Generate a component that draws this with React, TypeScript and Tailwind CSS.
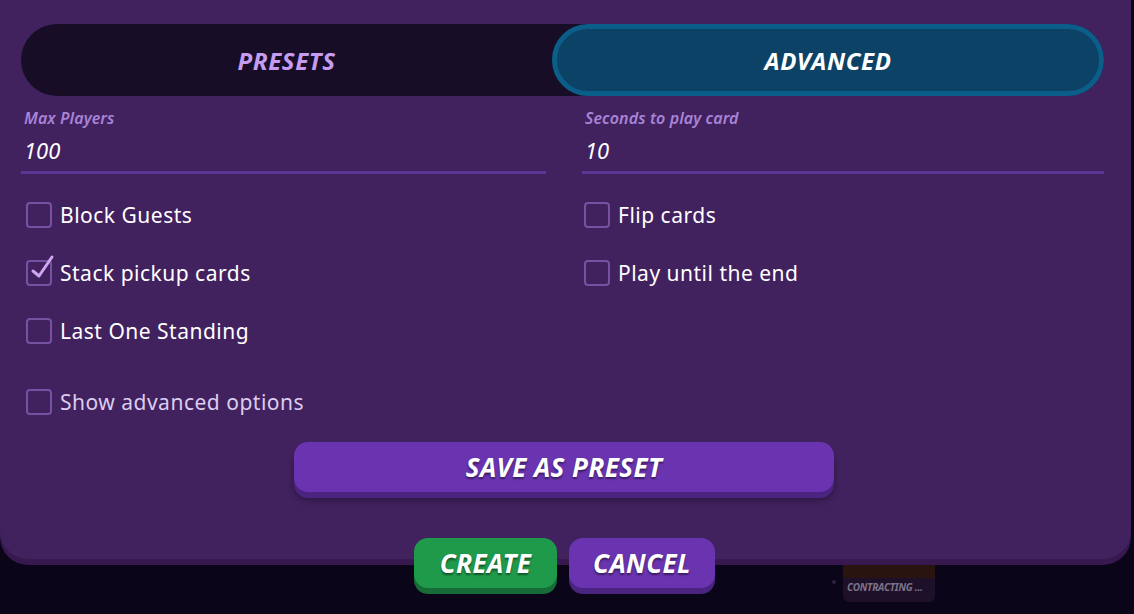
import { useState } from "react";

const font = { fontFamily: '"Noto Sans", "Open Sans", sans-serif' };

function Field({ label, value }: { label: string; value: string }) {
	return (
		<div className="flex flex-col">
			<span className="pl-[3px] text-[16px] font-semibold italic leading-[20px] tracking-[0.1px] text-[#a784d6]">
				{label}
			</span>
			<span className="mt-[9px] pl-[3px] text-[22px] italic leading-[26px] text-white">
				{value}
			</span>
			<div className="mt-[8px] h-[3px] bg-[#5f3594]" />
		</div>
	);
}

function Check({
	label,
	checked,
	muted,
	right,
}: {
	label: string;
	checked?: boolean;
	muted?: boolean;
	right?: boolean;
}) {
	return (
		<div
			className={`flex h-[30px] items-center gap-[8px] ${right ? "pl-[2px]" : "pl-[5px]"}`}
		>
			<div className="relative h-[26px] w-[26px] shrink-0 rounded-[4px] border-2 border-[#7652a3]">
				{checked && (
					<svg
						className="absolute left-[2px] top-[-8px]"
						width="26"
						height="28"
						viewBox="0 0 26 28"
						fill="none"
					>
						<path
							d="M3 17 L9 22 L22 3"
							stroke="#cfa6f2"
							strokeWidth="3"
							strokeLinecap="round"
							strokeLinejoin="round"
						/>
					</svg>
				)}
			</div>
			<span
				className={`text-[21px] leading-[26px] tracking-[0.5px] ${muted ? "text-[#dccdf0]" : "text-white"}`}
			>
				{label}
			</span>
		</div>
	);
}

export default function App() {
	const [tab, setTab] = useState<"presets" | "advanced">("advanced");

	const tabClass = (active: boolean) =>
		`flex items-center justify-center rounded-full pt-[2px] text-[24px] font-bold italic tracking-[0.6px] ${
			active
				? "border-[5px] border-[#0b5e88] bg-[#0d4267] text-white"
				: "text-[#c69cf0]"
		}`;

	return (
		<div
			className="relative h-[614px] w-[1134px] overflow-hidden bg-[#0a0519]"
			style={font}
		>
			{/* background card peeking below the modal */}
			<div className="absolute left-[843px] top-[540px] h-[62px] w-[92px] overflow-hidden rounded-[6px] bg-[#1d1028]">
				<div className="h-[38px] bg-[#2a1410]" />
				<div className="pl-[4px] pt-[2px] text-[10px] font-bold italic tracking-tight text-[#7d7387]">
					CONTRACTING ...
				</div>
			</div>
			<div className="absolute left-[832px] top-[580px] h-[4px] w-[4px] rounded-full bg-[#2a2340]" />

			<div className="relative w-[1131px] rounded-b-[28px] bg-[#42215f] pb-[6px] shadow-[0_6px_0_#37194f]">
				<div className="pl-[21px] pr-[27px] pt-[24px]">
					<div className="grid h-[72px] grid-cols-[531px_1fr] rounded-full bg-[#170d26]">
						<button
							onClick={() => setTab("presets")}
							className={tabClass(tab === "presets")}
						>
							PRESETS
						</button>
						<button
							onClick={() => setTab("advanced")}
							className={tabClass(tab === "advanced")}
						>
							ADVANCED
						</button>
					</div>

					<div className="mt-[12px] grid grid-cols-[525px_1fr] gap-x-[36px]">
						<Field label="Max Players" value="100" />
						<Field label="Seconds to play card" value="10" />
					</div>

					<div className="mt-[26px] grid grid-cols-[525px_1fr] gap-x-[36px] gap-y-[28px]">
						<Check label="Block Guests" />
						<Check label="Flip cards" right />
						<Check label="Stack pickup cards" checked />
						<Check label="Play until the end" right />
						<Check label="Last One Standing" />
					</div>

					<div className="mt-[41px]">
						<Check label="Show advanced options" muted />
					</div>

					<div className="mt-[25px] flex pl-[273px]">
						<button className="h-[50px] w-[540px] rounded-[14px] bg-[#6a33b0] text-[26px] font-bold italic tracking-[0.4px] text-white shadow-[0_6px_0_#4a2480,0_8px_6px_rgba(0,0,0,0.35)] [text-shadow:0_2px_2px_rgba(0,0,0,0.45)]">
							SAVE AS PRESET
						</button>
					</div>
				</div>
				<div className="h-[61px]" />
			</div>

			<div className="absolute left-[414px] top-[538px] flex gap-[12px]">
				<button className="h-[50px] w-[143px] rounded-[14px] bg-[#1f9a4a] text-[26px] font-bold italic tracking-[0.4px] text-white shadow-[0_6px_0_#176b36] [text-shadow:0_2px_2px_rgba(0,0,0,0.45)]">
					CREATE
				</button>
				<button className="h-[50px] w-[146px] rounded-[14px] bg-[#6a33b0] text-[26px] font-bold italic tracking-[0.4px] text-white shadow-[0_6px_0_#4a2480] [text-shadow:0_2px_2px_rgba(0,0,0,0.45)]">
					CANCEL
				</button>
			</div>
		</div>
	);
}
